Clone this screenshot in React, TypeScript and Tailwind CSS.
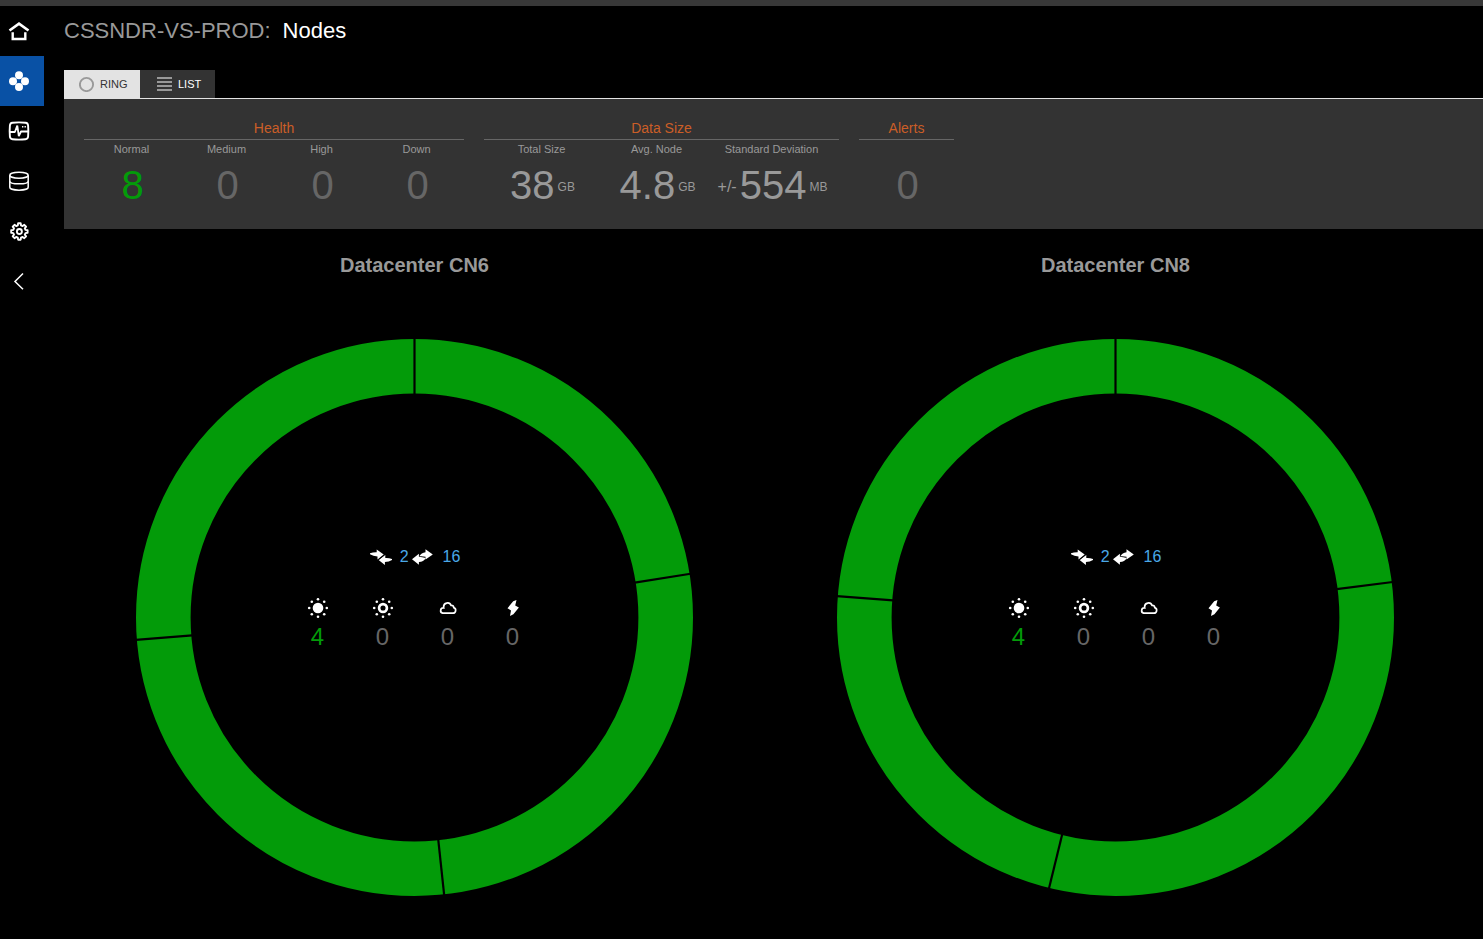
import { useState, type ReactNode } from 'react';

const HomeIcon = () => (
  <svg width="22" height="22" viewBox="0 0 22 22" fill="none" stroke="#fff" aria-hidden="true">
    <path d="M1.500 10.500 11 3.700l9.500 6.800" strokeWidth="2.700" />
    <path d="M4.700 12.300v6.700h12.600v-6.700" strokeWidth="2.400" />
  </svg>
);

const ClusterIcon = () => (
  <svg width="22" height="22" viewBox="0 0 22 22" fill="#fff" aria-hidden="true">
    <circle cx="11" cy="5.300" r="4" />
    <circle cx="5" cy="11.300" r="4" />
    <circle cx="17" cy="11.300" r="4" />
    <circle cx="11" cy="17" r="4" />
  </svg>
);

const ActivityIcon = () => (
  <svg width="22" height="22" viewBox="0 0 22 22" fill="none" stroke="#fff" aria-hidden="true">
    <path d="M4.500 2.800Q11 1.900 17.500 2.800q2.400.3 2.600 2.700.5 5.800 0 11.200-.2 2.200-2.600 2.500-6.500.8-13 0-2.400-.3-2.600-2.500-.5-5.400 0-11.200.2-2.400 2.600-2.700Z" strokeWidth="1.900" />
    <path d="M2 12h4.900L9.300 5.500l1.500 10.700 2.200-4.700H20" strokeWidth="1.800" strokeLinejoin="bevel" />
    <path d="M14 6.700h1.400M16.500 6.700h1.400" strokeWidth="1.600" />
  </svg>
);

const DatabaseIcon = () => (
  <svg width="22" height="22" viewBox="0 0 22 22" fill="none" stroke="#fff" strokeWidth="1.500" aria-hidden="true">
    <ellipse cx="11" cy="5.200" rx="9.200" ry="3" />
    <path d="M1.800 5.200v12c0 1.700 4.100 3 9.200 3s9.200-1.300 9.200-3v-12" />
    <path d="M1.800 11.200c0 1.600 4.100 2.600 9.200 2.600s9.200-1 9.200-2.600" />
  </svg>
);

const GearIcon = () => (
  <svg width="22" height="22" viewBox="0 0 22 22" fill="none" stroke="#fff" strokeWidth="1.900" strokeLinejoin="round" aria-hidden="true">
    <circle cx="11.400" cy="11.500" r="2.500" />
    <path d="M9.800 5.400 10.100 3.300h2.600l.3 2.100 1.600.7 1.700-1.300 1.800 1.800-1.300 1.700.7 1.600 2.100.3v2.600l-2.100.3-.7 1.600 1.300 1.700-1.800 1.800-1.700-1.300-1.600.7-.3 2.100h-2.600l-.3-2.100-1.600-.7-1.700 1.300-1.800-1.800L6 14.700l-.7-1.600-2.100-.3v-2.600l2.100-.3.7-1.600-1.300-1.700 1.800-1.800 1.700 1.300z" />
  </svg>
);

const CollapseIcon = () => (
  <svg width="22" height="22" viewBox="0 0 22 22" fill="none" stroke="#fff" strokeWidth="1.500" aria-hidden="true">
    <path d="M15 3.500 7 11.500l8 7.800" />
  </svg>
);

const RingTabIcon = () => (
  <svg width="16" height="16" viewBox="0 0 16 16" fill="none" stroke="#999" strokeWidth="1.900" aria-hidden="true">
    <circle cx="7.500" cy="8.500" r="6.600" />
  </svg>
);

const ListTabIcon = () => (
  <svg width="16" height="16" viewBox="0 0 16 16" fill="#999" aria-hidden="true">
    <path d="M0 1h15v2H0zM0 5h15v2H0zM0 9h15v2H0zM0 13h15v2H0z" />
  </svg>
);

const ConvergeIcon = () => (
  <svg width="22" height="16" viewBox="0 0 22 16" fill="#fff" aria-hidden="true">
    <path d="M0 4.300Q3 3.100 6.700 3.200V.4l7 5.200-6.200 5V7.500Q3.200 7 0 5.200Z" />
    <path d="M22 10.100Q18.500 8.800 15.300 9.100V6L8.600 10.900l6.300 5v-2.800Q19 12.800 22 11Z" />
    <path d="m8.400 11 6-5.200" stroke="#000" strokeWidth=".7" />
  </svg>
);

const ExchangeIcon = () => (
  <svg width="21" height="16" viewBox="0 0 21 16" fill="#fff" aria-hidden="true">
    <path d="M13.500.3 20.800 5.500l-7.300 5V7.800Q10.500 7 7.300 7.300 9.300 3.700 13.500 3.300z" />
    <path d="M6.900 4.700 0 10.300l6.900 5.400v-2.800Q11.600 12.900 13.800 9 10 8.100 6.900 7.800z" />
  </svg>
);

const SUN_RAYS = [
  [11, 2.2],
  [17.200, 4.800],
  [19.800, 11],
  [17.200, 17.200],
  [11, 19.800],
  [4.800, 17.200],
  [2.200, 11],
  [4.800, 4.800],
];

const SunIcon = ({ filled }: { filled: boolean }) => (
  <svg width="22" height="22" viewBox="0 0 22 22" fill="#fff" aria-hidden="true">
    {filled ? (
      <circle cx="11" cy="11" r="5.300" />
    ) : (
      <circle cx="11" cy="11" r="3.900" fill="none" stroke="#fff" strokeWidth="2.700" />
    )}
    {SUN_RAYS.map(([x, y]) => (
      <circle key={`${x}-${y}`} cx={x} cy={y} r="1.300" />
    ))}
  </svg>
);

const CloudIcon = () => (
  <svg width="22" height="22" viewBox="0 0 22 22" fill="none" stroke="#fff" strokeWidth="1.700" aria-hidden="true">
    <path d="M5.700 16.200h10.200a2.900 2.900 0 0 0 .9-5.600 2.500 2.500 0 0 0-2.700-2.200 3.900 3.900 0 0 0-7.500 1.600l.1 1A2.650 2.650 0 0 0 5.700 16.200Z" />
  </svg>
);

const BoltIcon = () => (
  <svg width="22" height="22" viewBox="0 0 22 22" fill="#fff" aria-hidden="true">
    <path d="M14.500 2.900 11.200 4.300 5.500 11.200l3.500 2.300L8 19l3.400-1.800L16.900 10.500 13.200 8.400z" />
  </svg>
);

const NAV: { label: string; icon: ReactNode }[] = [
  { label: 'Home', icon: <HomeIcon /> },
  { label: 'Nodes', icon: <ClusterIcon /> },
  { label: 'Activity', icon: <ActivityIcon /> },
  { label: 'Data', icon: <DatabaseIcon /> },
  { label: 'Services', icon: <GearIcon /> },
  { label: 'Collapse', icon: <CollapseIcon /> },
];

type Metric = { label?: string; value: string; prefix?: string; unit?: string; color: string; width: string };

const GROUPS: { title: string; width: string; metrics: Metric[] }[] = [
  {
    title: 'Health',
    width: 'w-[380px]',
    metrics: [
      { label: 'Normal', value: '8', color: 'text-[#039b09]', width: 'w-[95px]' },
      { label: 'Medium', value: '0', color: 'text-[#666]', width: 'w-[95px]' },
      { label: 'High', value: '0', color: 'text-[#666]', width: 'w-[95px]' },
      { label: 'Down', value: '0', color: 'text-[#666]', width: 'w-[95px]' },
    ],
  },
  {
    title: 'Data Size',
    width: 'w-[355px]',
    metrics: [
      { label: 'Total Size', value: '38', unit: 'GB', color: 'text-[#999]', width: 'w-[115px]' },
      { label: 'Avg. Node', value: '4.8', unit: 'GB', color: 'text-[#999]', width: 'w-[115px]' },
      { label: 'Standard Deviation', prefix: '+/-', value: '554', unit: 'MB', color: 'text-[#999]', width: 'w-[115px]' },
    ],
  },
  {
    title: 'Alerts',
    width: 'w-[95px]',
    metrics: [{ value: '0', color: 'text-[#666]', width: 'w-[95px]' }],
  },
];

const DATACENTERS = [
  { name: 'CN6', tokens: [0, 81, 173.9, 265.4] },
  { name: 'CN8', tokens: [0, 82.7, 193.8, 274.4] },
];

const STATES: { label: string; icon: ReactNode; count: number }[] = [
  { label: 'Normal', icon: <SunIcon filled />, count: 4 },
  { label: 'Medium', icon: <SunIcon filled={false} />, count: 0 },
  { label: 'High', icon: <CloudIcon />, count: 0 },
  { label: 'Down', icon: <BoltIcon />, count: 0 },
];

function MetricGroup({ title, width, metrics }: (typeof GROUPS)[number]) {
  return (
    <section className={width}>
      <h2 className="border-b border-[#666] pb-0.5 text-center text-[14px] leading-[18px] text-[#cb5e27]">{title}</h2>
      <dl className="flex">
        {metrics.map((m) => (
          <div key={m.label ?? title} className={`${m.width} flex flex-col items-center whitespace-nowrap`}>
            <dt className="h-[18px] text-[11px] leading-[18px] text-[#999]">{m.label}</dt>
            <dd className={`flex items-center gap-[3px] pl-0.5 text-[40px] leading-[54px] ${m.color}`}>
              {m.prefix && <span className="pt-1 text-[16px] leading-5">{m.prefix}</span>}
              {m.value}
              {m.unit && <span className="pt-1 text-[12px] leading-5">{m.unit}</span>}
            </dd>
          </div>
        ))}
      </dl>
    </section>
  );
}

function Datacenter({ name, tokens }: (typeof DATACENTERS)[number]) {
  return (
    <section className="flex min-w-0 flex-1 flex-col items-center">
      <h2 className="text-[20px] leading-[24px] font-bold text-[#999]">Datacenter {name}</h2>
      <div className="mt-[61px] grid w-full place-items-center">
        <svg viewBox="0 0 559 559" className="col-start-1 row-start-1 w-full max-w-[559px]" role="img" aria-label={`Datacenter ${name} ring`}>
          <circle cx="279.5" cy="279.5" r="251.2" fill="none" stroke="#039b09" strokeWidth="54.6" />
          {tokens.map((angle) => (
            <line key={angle} x1="279.5" y1="56.500" x2="279.5" y2="0" stroke="#000" strokeWidth="2.200" transform={`rotate(${angle} 279.5 279.5)`} />
          ))}
        </svg>
        <div className="col-start-1 row-start-1 flex flex-col items-center pb-9 pl-px">
          <div className="flex h-6 items-center text-[16px] text-[#4aa8e8]">
            <ConvergeIcon />
            <a href="#pending" className="ml-2">2</a>
            <span className="ml-[3px]"><ExchangeIcon /></span>
            <a href="#running" className="ml-2.5">16</a>
          </div>
          <ul className="mt-7 flex">
            {STATES.map((s) => (
              <li key={s.label} title={s.label} className="flex w-[65px] flex-col items-center">
                {s.icon}
                <span className={`text-[24px] leading-[36px] ${s.count > 0 ? 'text-[#039b09]' : 'text-[#666]'}`}>{s.count}</span>
              </li>
            ))}
          </ul>
        </div>
      </div>
    </section>
  );
}

export default function App() {
  const [view, setView] = useState('ring');
  const tab = (id: string) =>
    `flex h-7 items-center gap-[5px] text-[11px] ${view === id ? 'bg-[#e3e3e3] text-[#333]' : 'bg-[#333] text-white'}`;

  return (
    <div className="min-h-screen bg-black font-['Liberation_Sans',Arial,sans-serif]">
      <div className="h-1.5 bg-[#383838]" />
      <div className="flex">
        <nav aria-label="Main" className="flex w-11 shrink-0 flex-col">
          {NAV.map((item) => (
            <a
              key={item.label}
              href={`#${item.label.toLowerCase()}`}
              aria-label={item.label}
              className={`flex h-[50px] items-center pl-2 ${item.label === 'Nodes' ? 'bg-[#0951a5]' : ''}`}
            >
              {item.icon}
            </a>
          ))}
        </nav>
        <main className="min-w-0 flex-1 pl-5">
          <h1 className="flex gap-3 text-[22px] leading-[50px] text-white">
            <span className="text-[#999]">CSSNDR-VS-PROD:</span>
            <span>Nodes</span>
          </h1>
          <div className="mt-3.5 flex border-b border-[#e3e3e3]">
            <button type="button" onClick={() => setView('ring')} className={`${tab('ring')} w-[76px] pl-[15px]`}>
              <RingTabIcon />
              RING
            </button>
            <button type="button" onClick={() => setView('list')} className={`${tab('list')} w-[75px] pl-[17px]`}>
              <ListTabIcon />
              LIST
            </button>
          </div>
          <div className="flex flex-wrap gap-5 bg-[#333] px-5 pt-5 pb-[17px]">
            {GROUPS.map((g) => (
              <MetricGroup key={g.title} {...g} />
            ))}
          </div>
          <div className="mt-6 flex pr-[17px] pb-10">
            {DATACENTERS.map((dc) => (
              <Datacenter key={dc.name} {...dc} />
            ))}
          </div>
        </main>
      </div>
    </div>
  );
}
